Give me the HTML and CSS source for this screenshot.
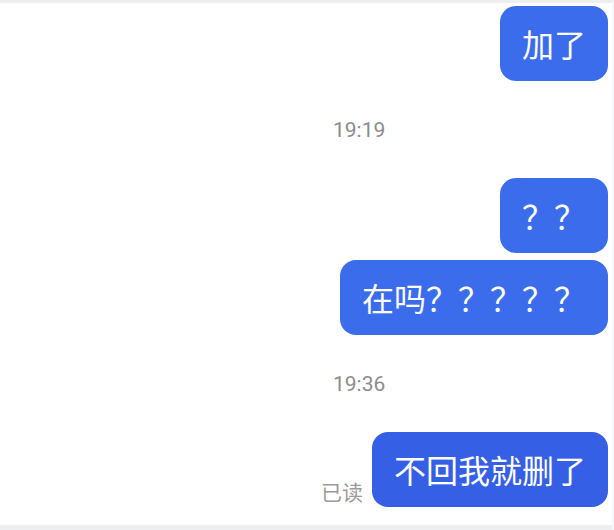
FILE: index.html
```html
<!DOCTYPE html>
<html lang="zh-CN">
<head>
    <meta charset="UTF-8">
    <meta name="viewport" content="width=device-width, initial-scale=1.0">
    <title>聊天</title>
    <link rel="stylesheet" href="styles.css">
</head>
<body>
    <div class="chat-screen">
        <div class="chat-list">
            <div class="msg-row">
                <div class="bubble">加了</div>
            </div>

            <div class="msg-time">19:19</div>

            <div class="msg-row">
                <div class="bubble">？？</div>
            </div>
            <div class="msg-row msg-row-tight">
                <div class="bubble">在吗？？？？？</div>
            </div>

            <div class="msg-time">19:36</div>

            <div class="msg-row">
                <span class="read-mark">已读</span>
                <div class="bubble bubble-last">不回我就删了</div>
            </div>
        </div>
        <div class="chat-footer"></div>
    </div>
</body>
</html>
```

FILE: styles.css
```css
:root {
    --bubble-blue: #3a6cec;
    --bubble-blue-dark: #3560e6;
    --strip-gray: #eeeff0;
    --time-gray: #8c8c8c;
}

* {
    box-sizing: border-box;
    margin: 0;
    padding: 0;
}

body {
    font-family: Roboto, "Noto Sans CJK SC", sans-serif;
    background-color: #ffffff;
}

.chat-screen {
    height: 530px;
    display: flex;
    flex-direction: column;
    border-top: 3px solid var(--strip-gray);
    border-right: 2px solid #f6f7f8;
}

.chat-list {
    display: flex;
    flex-direction: column;
    padding-right: 4px;
}

.msg-row {
    display: flex;
    justify-content: flex-end;
    align-items: flex-end;
    gap: 9px;
    margin-top: 34px;
}

.msg-row:first-child {
    margin-top: 3px;
}

.msg-row-tight {
    margin-top: 7px;
}

.bubble {
    background-color: var(--bubble-blue);
    color: #ffffff;
    font-family: "Noto Sans CJK SC", sans-serif;
    font-size: 32px;
    line-height: 41px;
    padding: 17px 22px;
    border-radius: 16px;
    white-space: nowrap;
}

.bubble-last {
    background-color: var(--bubble-blue-dark);
}

.msg-time {
    margin-top: 35px;
    padding-left: 333px;
    font-size: 21px;
    line-height: 28px;
    color: var(--time-gray);
}

.read-mark {
    font-family: "Noto Sans CJK SC", sans-serif;
    font-size: 21px;
    line-height: 28px;
    color: #9a9a9a;
    margin-bottom: 2px;
}

.chat-footer {
    margin-top: auto;
    height: 5px;
    background-color: var(--strip-gray);
}
```
